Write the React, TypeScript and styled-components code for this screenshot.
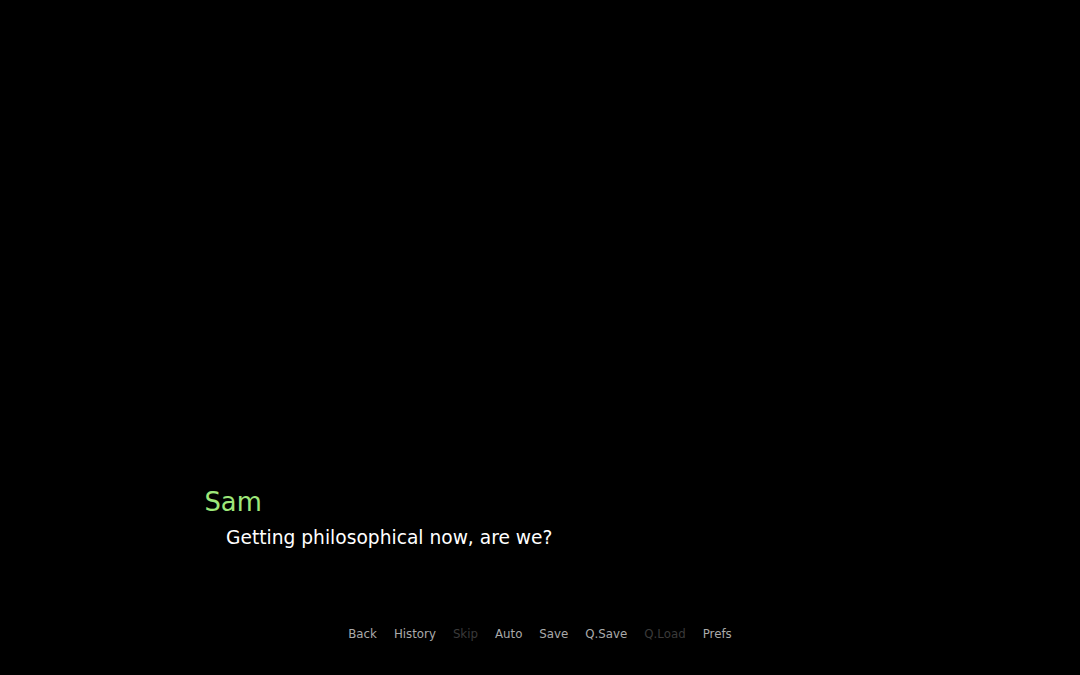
import React from 'react';
import styled, { createGlobalStyle } from "styled-components";

const GlobalStyle = createGlobalStyle`
  html, body {
    margin: 0;
    padding: 0;
    background: #000000;
  }
  body {
    font-family: "DejaVu Sans", "Liberation Sans", sans-serif;
  }
`

type QuickItem = {
  label: string,
  disabled?: boolean,
}

const quickItems: QuickItem[] = [
  { label: "Back" },
  { label: "History" },
  { label: "Skip", disabled: true },
  { label: "Auto" },
  { label: "Save" },
  { label: "Q.Save" },
  { label: "Q.Load", disabled: true },
  { label: "Prefs" },
]

export default function App() {
  return (
    <>
      <GlobalStyle />
      <Stage>
        <Scene />
        <TextBox>
          <SpeakerName>Sam</SpeakerName>
          <DialogueText>Getting philosophical now, are we?</DialogueText>
        </TextBox>
        <QuickMenu>
          {quickItems.map((item) => (
            <QuickButton key={item.label} $disabled={item.disabled}>
              {item.label}
            </QuickButton>
          ))}
        </QuickMenu>
      </Stage>
    </>
  );
}

const Stage = styled.div`
  display: flex;
  flex-direction: column;
  height: 100vh;
  background: #000000;
  overflow: hidden;
`

const Scene = styled.div`
  flex: 1;
`

const TextBox = styled.div`
  display: flex;
  flex-direction: column;
  gap: 8px;
`

const SpeakerName = styled.div`
  padding-left: 204.5px;
  font-size: 25.8px;
  line-height: 29px;
  color: #9ee87a;
`

const DialogueText = styled.div`
  padding-left: 226px;
  font-size: 18.65px;
  line-height: 26px;
  color: #ffffff;
`

const QuickMenu = styled.div`
  display: flex;
  justify-content: center;
  gap: 17px;
  margin-top: 75px;
  padding-bottom: 33px;
`

const QuickButton = styled.div<{ $disabled?: boolean }>`
  font-size: 11.8px;
  line-height: 16px;
  color: ${(p) => (p.$disabled ? "#3a3a3a" : "#aaaaaa")};
  cursor: ${(p) => (p.$disabled ? "default" : "pointer")};
  &:hover {
    color: ${(p) => (p.$disabled ? "#3a3a3a" : "#ffffff")};
  }
`
